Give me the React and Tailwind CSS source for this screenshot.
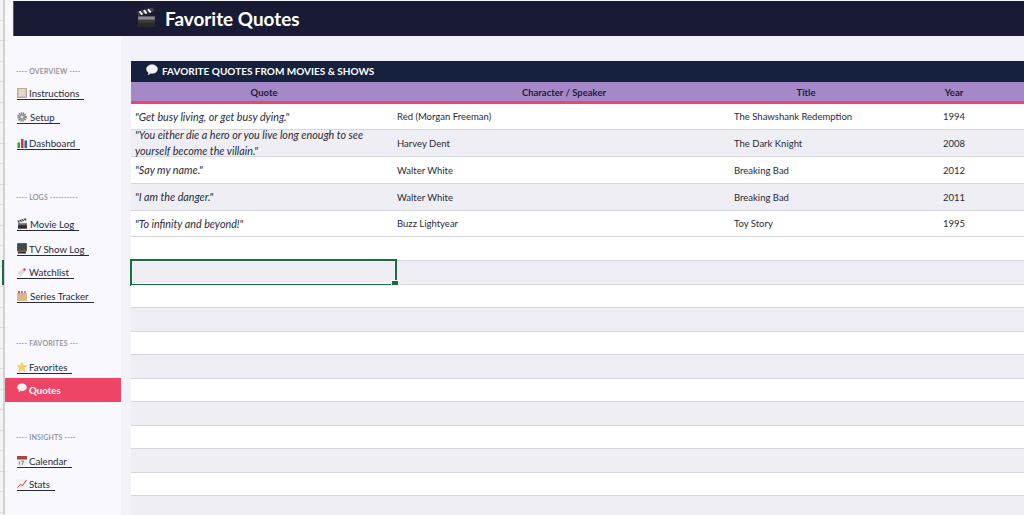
import React from 'react';

const font = { fontFamily: 'Lato, "Open Sans", sans-serif' };

// little drawings standing in for the emoji used in the sheet
const Clapper = ({ size = 14 }) => (
  <svg width={size} height={size} viewBox="0 0 20 20">
    <rect x="2" y="9" width="16" height="10" fill="#3d3d3d" />
    <rect x="2" y="9" width="16" height="3" fill="#8a8a8a" />
    <rect x="2" y="15" width="16" height="4" fill="#2a2a2a" />
    <path d="M1 4.5 L16 0.5 L17.5 4 L2 8.5 Z" fill="#444" />
    <path d="M3.5 4 L6 7.4 M7.5 3 L10 6.3 M11.5 2 L14 5.2" stroke="#f0f0f0" strokeWidth="1.8" />
  </svg>
);

const Bubble = ({ size = 13 }) => (
  <svg width={size} height={size} viewBox="0 0 20 20">
    <ellipse cx="10" cy="8.5" rx="9.5" ry="7.5" fill="#f6f6f6" stroke="#b8b8b8" strokeWidth="0.6" />
    <path d="M4 13 L3 19 L9 15 Z" fill="#d9d9d9" />
    <circle cx="6" cy="8.5" r="0.8" fill="#cfcfcf" />
    <circle cx="10" cy="8.5" r="0.8" fill="#cfcfcf" />
    <circle cx="14" cy="8.5" r="0.8" fill="#cfcfcf" />
  </svg>
);

const Ledger = () => (
  <svg width="10" height="10" viewBox="0 0 20 20">
    <rect x="0" y="0" width="20" height="20" fill="#c9a987" />
    <rect x="3" y="2" width="14" height="15" fill="#dcdcdc" />
  </svg>
);

const Gear = () => (
  <svg width="10" height="10" viewBox="0 0 20 20">
    <circle cx="10" cy="10" r="7.5" fill="none" stroke="#777" strokeWidth="4" strokeDasharray="2.5 1.5" />
    <circle cx="10" cy="10" r="6" fill="#8d8d8d" />
    <circle cx="10" cy="10" r="3" fill="#e2e2e2" />
  </svg>
);

const Bars = () => (
  <svg width="10" height="10" viewBox="0 0 20 20">
    <rect x="0" y="0" width="20" height="20" fill="#f2f2f2" />
    <rect x="1" y="9" width="5" height="11" fill="#2f9e44" />
    <rect x="8" y="2" width="5" height="18" fill="#d9342b" />
    <rect x="15" y="5" width="5" height="15" fill="#2563c9" />
  </svg>
);

const Tv = () => (
  <svg width="10" height="11" viewBox="0 0 20 22">
    <rect x="0" y="0" width="20" height="17" rx="2" fill="#6b5344" />
    <rect x="2" y="2" width="16" height="11" fill="#3b4a52" />
    <rect x="2" y="17" width="16" height="4" fill="#2c2c2c" />
  </svg>
);

const Pin = () => (
  <svg width="10" height="10" viewBox="0 0 20 20">
    <path d="M0 12 L13 2 L18 8 L6 19 Z" fill="#e3dcd6" />
    <circle cx="15" cy="5" r="2.4" fill="#e0434f" />
  </svg>
);

const Box = () => (
  <svg width="10" height="10" viewBox="0 0 20 20">
    <rect x="0" y="4" width="20" height="16" fill="#deb887" />
    <rect x="2" y="0" width="4" height="5" fill="#d9534f" />
    <rect x="8" y="0" width="4" height="5" fill="#6f8fd6" />
    <rect x="14" y="0" width="4" height="5" fill="#c77dc2" />
  </svg>
);

const Star = () => (
  <svg width="10" height="10" viewBox="0 0 20 20">
    <path d="M10 0 L13 7 L20 7.6 L14.6 12.2 L16.4 19.5 L10 15.6 L3.6 19.5 L5.4 12.2 L0 7.6 L7 7 Z" fill="#f9d45c" stroke="#d9a520" strokeWidth="0.6" />
  </svg>
);

const CalendarIcon = () => (
  <svg width="10" height="10" viewBox="0 0 20 20">
    <rect x="0" y="0" width="20" height="20" fill="#eeeeee" />
    <rect x="0" y="0" width="20" height="7" fill="#a5473f" />
    <path d="M8 10 H13 L10 18 M5 11 V17" stroke="#666" strokeWidth="1.5" fill="none" />
  </svg>
);

const Trend = () => (
  <svg width="10" height="10" viewBox="0 0 20 20">
    <rect x="0" y="0" width="20" height="20" fill="#f3f3f3" />
    <path d="M1 17 L7 11 L11 13 L19 2" stroke="#d33a36" strokeWidth="2" fill="none" />
  </svg>
);

const Section = ({ text, className }) => (
  <p className={`pl-[11px] text-[7px] leading-[10px] font-semibold tracking-[0.2px] text-[#8b8b9c] ${className}`}>{text}</p>
);

const NavItem = ({ icon, label, wide, className }) => (
  <div className={`pl-[12px] h-[16px] flex items-start ${className}`}>
    <span className="flex items-end border-b border-[#2a2a3c]">
      <span className="mb-[1px] flex">{icon}</span>
      <span className={`text-[9.7px] leading-[12px] text-[#2a2a3c] pr-[5px] ${wide ? 'pl-[3px]' : 'pl-[2px]'}`}>{label}</span>
    </span>
  </div>
);

const quotes = [
  { q: '"Get busy living, or get busy dying."', who: 'Red (Morgan Freeman)', title: 'The Shawshank Redemption', year: '1994', h: 'h-[26px]' },
  { q: '"You either die a hero or you live long enough to see yourself become the villain."', who: 'Harvey Dent', title: 'The Dark Knight', year: '2008', h: 'h-[27px]' },
  { q: '"Say my name."', who: 'Walter White', title: 'Breaking Bad', year: '2012', h: 'h-[27px]' },
  { q: '"I am the danger."', who: 'Walter White', title: 'Breaking Bad', year: '2011', h: 'h-[27px]' },
  { q: '"To infinity and beyond!"', who: 'Buzz Lightyear', title: 'Toy Story', year: '1995', h: 'h-[26px]' },
];

const emptyRows = ['h-[24px]', 'h-[24px]', 'h-[23px]', 'h-[24px]', 'h-[23px]', 'h-[24px]', 'h-[23px]', 'h-[24px]', 'h-[23px]', 'h-[24px]', 'h-[23px]', 'h-[24px]'];

function App() {
  return (
    <div className="w-[1024px] h-[515px] overflow-hidden bg-white flex" style={font}>
      {/* row header strip from the sheet */}
      <div className="w-[5px] shrink-0 border-r-2 border-[#d2d2d2] relative bg-[repeating-linear-gradient(to_bottom,#f4f4f4_0px,#f4f4f4_19.5px,#dcdcdc_19.5px,#dcdcdc_20.5px)]">
        <div className="absolute left-[2px] top-[260px] w-[2px] h-[25px] bg-[#1a6b3c]" />
      </div>

      <div className="w-[1019px] flex flex-col">
        <div className="h-[36px] shrink-0 flex bg-[#f8f8fe]">
          <div className="w-[8px] shrink-0" />
          <div className="flex-1 mt-[1px] bg-[#191b34] border-l border-[#55566a] flex items-center pl-[122px]">
            <span className="-mt-[3px] flex"><Clapper size={21} /></span>
            <span className="ml-[8px] text-[18.9px] font-bold text-white leading-[26px]">Favorite Quotes</span>
          </div>
        </div>

        <div className="flex-1 flex min-h-0">
          <aside className="w-[116px] shrink-0 bg-[#f8f8fe] pt-[30px]">
            <Section text="---- OVERVIEW ----" />
            <NavItem icon={<Ledger />} label="Instructions" className="mt-[11px]" />
            <NavItem icon={<Gear />} label="Setup" wide className="mt-[8px]" />
            <NavItem icon={<Bars />} label="Dashboard" className="mt-[10px]" />
            <Section text="---- LOGS ----------" className="mt-[39px]" />
            <NavItem icon={<Clapper size={11} />} label="Movie Log" className="mt-[16px]" />
            <NavItem icon={<Tv />} label="TV Show Log" className="mt-[9px]" />
            <NavItem icon={<Pin />} label="Watchlist" className="mt-[7px]" />
            <NavItem icon={<Box />} label="Series Tracker" wide className="mt-[8px]" />
            <Section text="---- FAVORITES ---" className="mt-[32px]" />
            <NavItem icon={<Star />} label="Favorites" className="mt-[13px]" />
            <div className="mt-[1px] h-[24px] bg-[#ee4466] pl-[12px] flex items-center">
              <span className="-mt-[4px] flex"><Bubble size={10} /></span>
              <span className="ml-[2px] text-[9.7px] font-bold text-white">Quotes</span>
            </div>
            <Section text="---- INSIGHTS ----" className="mt-[30px]" />
            <NavItem icon={<CalendarIcon />} label="Calendar" className="mt-[13px]" />
            <NavItem icon={<Trend />} label="Stats" className="mt-[7px]" />
          </aside>

          <main className="flex-1 min-w-0 bg-[#f2f2f8] pl-[10px] pt-[25px]">
            <div className="h-[21px] bg-[#16213e] flex items-center pl-[15px]">
              <span className="-mt-[4px] flex"><Bubble size={12} /></span>
              <span className="ml-[4px] text-[10px] font-bold text-white">FAVORITE QUOTES FROM MOVIES &amp; SHOWS</span>
            </div>
            <div className="h-[22px] bg-[#a588c7] border-b-[3px] border-[#ee4466] grid grid-cols-[262px_337px_150px_1fr] text-[9.5px] font-bold text-[#1e1e36] leading-[21px] text-center">
              <span className="pl-[4px]">Quote</span>
              <span className="pl-[5px]">Character / Speaker</span>
              <span className="pl-[2px]">Title</span>
              <span className="pl-[4px]">Year</span>
            </div>
            {quotes.map((r, i) => (
              <div key={r.year} className={`${r.h} border-b border-[#d6d6e2] grid grid-cols-[262px_337px_150px_1fr] items-center text-[9.5px] text-[#2a2a3c] ${i % 2 ? 'bg-[#eeeef4]' : 'bg-white'}`}>
                <span className="pl-[4px] -my-[3px] text-[10.75px] leading-[16px] italic">{r.q}</span>
                <span className="pl-[4px] pt-[2px]">{r.who}</span>
                <span className="pl-[4px] pt-[2px]">{r.title}</span>
                <span className="pl-[63px] pt-[2px]">{r.year}</span>
              </div>
            ))}
            {emptyRows.map((h, i) => (
              <div key={i} className={`${h} border-b border-[#d6d6e2] relative ${i % 2 ? 'bg-[#eeeef4]' : 'bg-white'}`}>
                {i === 1 && (
                  <div className="absolute -left-[1px] -top-[2px] w-[267px] h-[27px] border-2 border-[#15703e]">
                    <div className="w-full h-full border border-white" />
                    <div className="absolute -right-[4px] -bottom-[4px] w-[8px] h-[8px] bg-[#15703e] border border-white" />
                  </div>
                )}
              </div>
            ))}
          </main>
        </div>
      </div>
    </div>
  );
}

export default App;
